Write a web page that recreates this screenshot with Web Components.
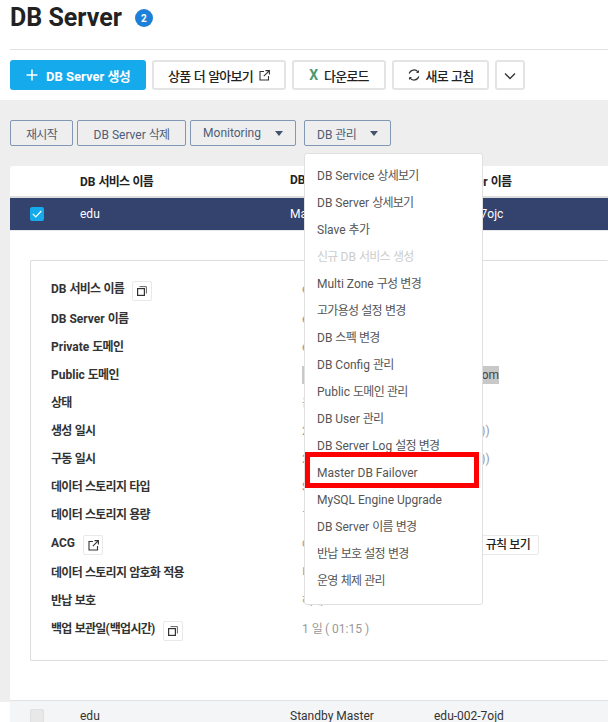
<!DOCTYPE html>
<html lang="ko">
<head>
<meta charset="utf-8">
<title>DB Server</title>
<style>
  html, body { margin: 0; width: 608px; height: 722px; overflow: hidden; background: #fff; }
  body { font-family: Roboto, "Noto Sans CJK KR", sans-serif; font-size: 13px; color: #222; }
</style>
</head>
<body>
<db-page-title count="2">DB Server</db-page-title>

<db-toolbar>
  <db-button kind="primary" style="width:136px"><db-icon name="plus" slot="before"></db-icon>DB Server 생성</db-button>
  <db-button style="width:134px">상품 더 알아보기<db-icon name="link" slot="after"></db-icon></db-button>
  <db-button style="width:94px"><span slot="before" style="color:#4c9a6e;font-weight:700;font-size:14px">X</span>다운로드</db-button>
  <db-button style="width:97px"><db-icon name="refresh" slot="before"></db-icon>새로 고침</db-button>
  <db-button style="width:30px"><db-icon name="chevron"></db-icon></db-button>
</db-toolbar>

<db-content>
  <db-actions>
    <db-action style="width:63px">재시작</db-action>
    <db-action style="width:109px">DB Server 삭제</db-action>
    <db-action style="width:106px" caret>Monitoring</db-action>
    <db-dropdown>
      <db-action style="width:87px" caret>DB 관리</db-action>
      <db-menu slot="menu">
        <db-menu-item>DB Service 상세보기</db-menu-item>
        <db-menu-item>DB Server 상세보기</db-menu-item>
        <db-menu-item>Slave 추가</db-menu-item>
        <db-menu-item disabled>신규 DB 서비스 생성</db-menu-item>
        <db-menu-item>Multi Zone 구성 변경</db-menu-item>
        <db-menu-item>고가용성 설정 변경</db-menu-item>
        <db-menu-item>DB 스펙 변경</db-menu-item>
        <db-menu-item>DB Config 관리</db-menu-item>
        <db-menu-item>Public 도메인 관리</db-menu-item>
        <db-menu-item>DB User 관리</db-menu-item>
        <db-menu-item>DB Server Log 설정 변경</db-menu-item>
        <db-menu-item>Master DB Failover</db-menu-item>
        <db-menu-item>MySQL Engine Upgrade</db-menu-item>
        <db-menu-item>DB Server 이름 변경</db-menu-item>
        <db-menu-item>반납 보호 설정 변경</db-menu-item>
        <db-menu-item>운영 체제 관리</db-menu-item>
      </db-menu>
    </db-dropdown>
  </db-actions>

  <db-table>
    <db-row kind="head"><span></span><span>DB 서비스 이름</span><span>DB Role</span><span>DB Server 이름</span></db-row>
    <db-row kind="selected"><db-check checked></db-check><span>edu</span><span>Master</span><span>edu-001-7ojc</span></db-row>
    <db-detail>
      <db-field label="DB 서비스 이름" icon="copy">edu</db-field>
      <db-field label="DB Server 이름">edu-001-7ojc</db-field>
      <db-field label="Private 도메인">edu-001-7ojc.vpc.ntruss.com</db-field>
      <db-field label="Public 도메인"><span style="background:#c8c8c8;color:#444;display:inline-block;width:197px;text-align:right;line-height:18px;white-space:nowrap">db-edu.pub-cdb.ntruss.com</span></db-field>
      <db-field label="상태">운영중</db-field>
      <db-field label="생성 일시"><span style="letter-spacing:.1px">2021-05-20 11:23:15 (UTC+09:00))</span></db-field>
      <db-field label="구동 일시"><span style="letter-spacing:.1px">2021-05-20 11:29:42 (UTC+09:00))</span></db-field>
      <db-field label="데이터 스토리지 타입">SSD</db-field>
      <db-field label="데이터 스토리지 용량">10GB</db-field>
      <db-field label="ACG" icon="link">
        <span style="display:flex;align-items:flex-start;justify-content:space-between;width:237px">cloud-mysql-acg<db-rule-button>규칙 보기</db-rule-button></span>
      </db-field>
      <db-field label="데이터 스토리지 암호화 적용">미적용</db-field>
      <db-field label="반납 보호">해제</db-field>
      <db-field label="백업 보관일(백업시간)" icon="copy">1 일 ( 01:15 )</db-field>
    </db-detail>
    <db-row kind="plain"><db-check></db-check><span>edu</span><span>Standby Master</span><span>edu-002-7ojd</span></db-row>
  </db-table>
</db-content>

<script>
const ICONS = {
  plus: '<svg width="12" height="12" viewBox="0 0 12 12"><path d="M6 .5v11M.5 6h11" stroke="#fff" stroke-width="1.500" fill="none"/></svg>',
  link: '<svg width="11" height="11" viewBox="0 0 11 11" fill="none" stroke="#333" stroke-width="1.100"><path d="M5 1.500H1v8.500h8.500V6M6.500 .6h3.900v3.900M10.200 .8L4.800 6.200"/></svg>',
  refresh: '<svg width="12" height="12" viewBox="0 0 12 12" fill="none" stroke="#333" stroke-width="1.200"><path d="M1.200 4.500A5 5 0 0 1 10 3M10.800 7.500A5 5 0 0 1 2 9"/><path d="M10.500 1.500v2H8.500M1.500 10.500v-2h2" stroke-width="1"/></svg>',
  chevron: '<svg width="12" height="8" viewBox="0 0 12 8" fill="none" stroke="#333" stroke-width="1.300"><path d="M1 1.500l5 5 5-5"/></svg>',
  copy: '<svg width="10" height="10" viewBox="0 0 10 10" fill="none" stroke="#333" stroke-width="1.200"><rect x=".6" y="2.600" width="6.800" height="6.800"/><path d="M2.500 .6h6.900v6.900" stroke="#666" stroke-width="1"/></svg>'
};

// hangul in the reference is set narrower than Noto's, latin is not
const KO_STYLE = 'letter-spacing:-.06em';
const koHtml = text => text.replace(/[가-힣]+/g, m => `<span style="${KO_STYLE}">${m}</span>`);

class DbIcon extends HTMLElement {
  connectedCallback() {
    if (this.shadowRoot) return;
    const shadow = this.attachShadow({ mode: 'open' });
    shadow.innerHTML = `<style>:host{display:inline-flex;align-items:center;justify-content:center;line-height:0}</style>${ICONS[this.getAttribute('name')] || ''}`;
  }
}

class DbPageTitle extends HTMLElement {
  constructor() {
    super();
    this.attachShadow({ mode: 'open' }).innerHTML = `
      <style>
        :host { display: flex; align-items: center; height: 49px; margin-left: 10px; border-bottom: 1px solid #e2e2e2; }
        .title { font-size: 25px; font-weight: 700; color: #222; line-height: 36px; margin-top: -13px; }
        .badge { width: 18px; height: 18px; border-radius: 50%; background: #1c7fd8; color: #fff; font-size: 10px; font-weight: 700; display: flex; align-items: center; justify-content: center; margin: -13px 0 0 13px; }
      </style>
      <span class="title"><slot></slot></span><span class="badge"></span>`;
  }
  connectedCallback() {
    this.shadowRoot.querySelector('.badge').textContent = this.getAttribute('count');
  }
}

class DbToolbar extends HTMLElement {
  constructor() {
    super();
    this.attachShadow({ mode: 'open' }).innerHTML = `
      <style>:host { display: flex; gap: 6px; padding: 10px 10px; height: 30px; background: #fff; }</style>
      <slot></slot>`;
  }
}

class DbButton extends HTMLElement {
  constructor() {
    super();
    this.attachShadow({ mode: 'open' }).innerHTML = `
      <style>
        :host { display: inline-flex; align-items: center; justify-content: center; box-sizing: border-box; height: 30px; flex: none;
                border: 2px solid #e4e4e4; border-radius: 3px; background: #fff; color: #222; font-size: 13px; font-weight: 500; white-space: nowrap; }
        :host([kind=primary]) { background: #14aaeb; border-color: #14aaeb; color: #fff; font-weight: 700; }
        span { display: inline-block; }
        ::slotted([slot=before]) { margin-right: 6px; }
        ::slotted([slot=after]) { margin-left: 6px; }
        :host([kind=primary]) ::slotted([slot=before]) { margin-right: 8px; }
      </style>
      <slot name="before"></slot><span><slot></slot></span><slot name="after"></slot>`;
  }
}

class DbContent extends HTMLElement {
  constructor() {
    super();
    this.attachShadow({ mode: 'open' }).innerHTML = `
      <style>:host { display: block; background: #eee; padding: 20px 0 0 10px; height: 602px; box-sizing: border-box; }</style>
      <slot></slot>`;
  }
}

class DbActions extends HTMLElement {
  constructor() {
    super();
    this.attachShadow({ mode: 'open' }).innerHTML = `
      <style>:host { display: flex; gap: 4px; height: 26px; margin-bottom: 20px; position: relative; z-index: 5; }</style>
      <slot></slot>`;
  }
}

class DbAction extends HTMLElement {
  constructor() {
    super();
    this.attachShadow({ mode: 'open' }).innerHTML = `
      <style>
        :host { display: inline-flex; align-items: center; justify-content: center; gap: 14px; box-sizing: border-box; height: 26px; flex: none;
                border: 1px solid #8297b3; border-radius: 2px; color: #4e5d75; font-size: 12px; white-space: nowrap; }
        .caret { display: none; width: 0; height: 0; border: 4px solid transparent; border-top: 5px solid #44536e; border-bottom: 0; }
        :host([caret]) .caret { display: block; }
      </style>
      <span><slot></slot></span><i class="caret"></i>`;
  }
}

class DbDropdown extends HTMLElement {
  constructor() {
    super();
    this.attachShadow({ mode: 'open' }).innerHTML = `
      <style>
        :host { display: inline-block; position: relative; margin-left: 4px; }
        .pop { position: absolute; left: 0; top: 33px; }
      </style>
      <slot></slot><div class="pop"><slot name="menu"></slot></div>`;
  }
}

class DbMenu extends HTMLElement {
  constructor() {
    super();
    this.attachShadow({ mode: 'open' }).innerHTML = `
      <style>
        :host { display: block; position: relative; box-sizing: border-box; width: 179px; padding: 9px 0; background: #fff; border: 1px solid #e0e0e0; border-radius: 3px; }
        .mark { position: absolute; left: 0; top: 298px; width: 174px; height: 36px; box-sizing: border-box; border: 5px solid #f00; pointer-events: none; }
      </style>
      <slot></slot><div class="mark"></div>`;
  }
}

class DbMenuItem extends HTMLElement {
  constructor() {
    super();
    this.attachShadow({ mode: 'open' }).innerHTML = `
      <style>
        :host { display: block; height: 27px; line-height: 27px; padding-left: 12px; font-size: 12px; color: #555; white-space: nowrap; }
        :host([disabled]) { color: #ccc; }
      </style>
      <slot></slot>`;
  }
}

class DbTable extends HTMLElement {
  constructor() {
    super();
    this.attachShadow({ mode: 'open' }).innerHTML = `
      <style>:host { display: block; background: #fff; border-radius: 3px 0 0 0; min-height: 556px; }</style>
      <slot></slot>`;
  }
}

class DbRow extends HTMLElement {
  constructor() {
    super();
    this.attachShadow({ mode: 'open' }).innerHTML = `
      <style>
        :host { display: grid; grid-template-columns: 70px 210px 144px 1fr; align-items: center; font-size: 12px; color: #333; }
        :host([kind=head]) { height: 28px; padding-bottom: 2px; border-bottom: 2px solid #ddd; font-weight: 700; color: #222; }
        :host([kind=selected]) { height: 31px; padding-bottom: 1px; background: #34426e; color: #fff; border-bottom: 1px solid #e8e8e8; }
        :host([kind=plain]) { height: 30px; background: #f4f5f7; border-top: 1px solid #e2e2e2; }
      </style>
      <slot></slot>`;
  }
}

class DbCheck extends HTMLElement {
  constructor() {
    super();
    this.attachShadow({ mode: 'open' }).innerHTML = `
      <style>
        :host { display: flex; align-items: center; justify-content: center; width: 14px; height: 14px; margin-left: 20px; border-radius: 2px; background: #e8e8e8; box-shadow: inset 0 0 0 1px #e0e0e0; }
        :host([checked]) { background: #14aaeb; box-shadow: none; }
        svg { display: none; }
        :host([checked]) svg { display: block; }
      </style>
      <svg width="10" height="8" viewBox="0 0 10 8" fill="none" stroke="#fff" stroke-width="1.200"><path d="M.8 3.800l3 3L9.300 1"/></svg>`;
  }
}

class DbDetail extends HTMLElement {
  constructor() {
    super();
    this.attachShadow({ mode: 'open' }).innerHTML = `
      <style>
        :host { display: block; padding: 29px 0 39px 20px; }
        .box { border: 1px solid #ddd; border-radius: 2px; border-right: 0; padding: 14px 0 15px 20px; }
      </style>
      <div class="box"><slot></slot></div>`;
  }
}

class DbField extends HTMLElement {
  constructor() {
    super();
    this.attachShadow({ mode: 'open' }).innerHTML = `
      <style>
        :host { display: grid; grid-template-columns: 251px 1fr; align-items: start; min-height: 28px; font-size: 12px; }
        .label { display: flex; align-items: flex-start; font-weight: 700; color: #333; line-height: 20px; padding-top: 4px; white-space: nowrap; }
        .value { color: #999; line-height: 20px; padding-top: 4px; white-space: nowrap; }
        .tool { display: none; box-sizing: border-box; width: 20px; height: 20px; margin: 2px 0 4px 8px; border: 1px solid #e8e8e8; border-radius: 2px; align-items: center; justify-content: center; }
        :host([icon]) .tool { display: flex; }
      </style>
      <div class="label"><span class="text"></span><span class="tool"></span></div>
      <div class="value"><slot></slot></div>`;
  }
  connectedCallback() {
    this.shadowRoot.querySelector('.text').innerHTML = koHtml(this.getAttribute('label'));
    const icon = this.getAttribute('icon');
    if (icon) this.shadowRoot.querySelector('.tool').innerHTML = ICONS[icon];
  }
}

class DbRuleButton extends HTMLElement {
  constructor() {
    super();
    this.attachShadow({ mode: 'open' }).innerHTML = `
      <style>:host { display: inline-flex; align-items: center; box-sizing: border-box; height: 20px; margin-top: 2px; padding: 0 8px 0 0; width: 60px; justify-content: flex-end; border: 1px solid #e8e8e8; border-radius: 2px; color: #222; font-size: 12px; font-weight: 500; background: #fff; }</style>
      <span><slot></slot></span>`;
  }
}

customElements.define('db-icon', DbIcon);
customElements.define('db-page-title', DbPageTitle);
customElements.define('db-toolbar', DbToolbar);
customElements.define('db-button', DbButton);
customElements.define('db-content', DbContent);
customElements.define('db-actions', DbActions);
customElements.define('db-action', DbAction);
customElements.define('db-dropdown', DbDropdown);
customElements.define('db-menu', DbMenu);
customElements.define('db-menu-item', DbMenuItem);
customElements.define('db-table', DbTable);
customElements.define('db-row', DbRow);
customElements.define('db-check', DbCheck);
customElements.define('db-detail', DbDetail);
customElements.define('db-field', DbField);
customElements.define('db-rule-button', DbRuleButton);

// wrap the hangul runs of the light DOM texts
const walker = document.createTreeWalker(document.body, NodeFilter.SHOW_TEXT);
const textNodes = [];
while (walker.nextNode()) {
  const node = walker.currentNode;
  if (node.parentNode.nodeName !== 'SCRIPT' && /[가-힣]/.test(node.data)) textNodes.push(node);
}
textNodes.forEach(node => {
  const holder = document.createElement('template');
  holder.innerHTML = koHtml(node.data);
  node.replaceWith(holder.content);
});
</script>
</body>
</html>
